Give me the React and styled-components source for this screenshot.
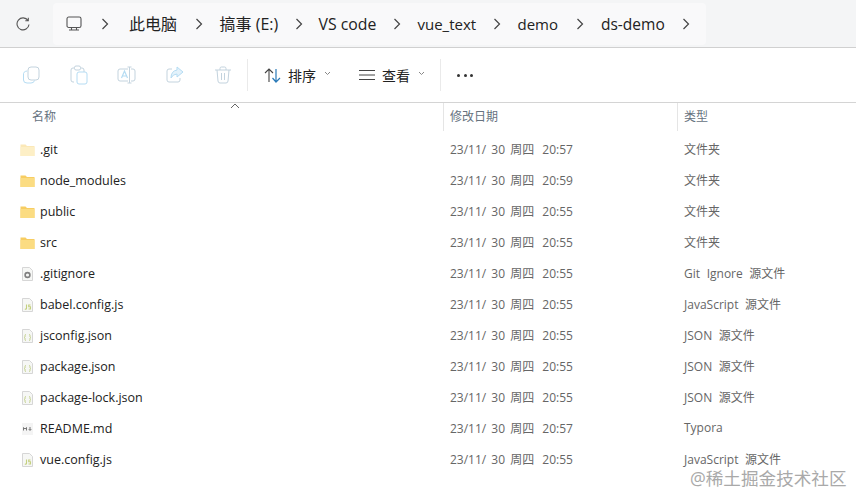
import React from "react";
import styled, { createGlobalStyle } from "styled-components";

const Global = createGlobalStyle`
  html, body { margin: 0; padding: 0; background: #fff; }
  body { font-family: "Open Sans", "Noto Sans CJK SC", sans-serif; overflow: hidden; }
`;
const Page = styled.div`
  position: relative; width: 856px; height: 494px; background: #fff; overflow: hidden;
  font-family: "Open Sans", "Noto Sans CJK SC", sans-serif;
`;
const AddressBar = styled.div`
  height: 48px; box-sizing: border-box; display: flex; align-items: stretch; background: #f4f5f6;
  border-bottom: 1px solid #d0d0d0; padding: 3px 0 2px 0;
`;
const Refresh = styled.div`width: 53px; display: flex; align-items: center; padding-left: 16px; box-sizing: border-box;`;
const Crumbs = styled.div`
  flex: 1; margin-right: 150px; display: flex; align-items: center; background: #f9f9fa; padding-left: 13px; border-radius: 4px;
`;
const Crumb = styled.span`
  font-size: ${p => p.$size}px; color: #222; white-space: nowrap; margin-left: ${p => p.$ml}px; width: ${p => p.$w}px; line-height: 20px; flex: none;
`;
const Chevron = styled.svg`width: 8px; height: 12px; margin-left: ${p => p.$ml}px; flex: none;`;
const Toolbar = styled.div`
  height: 55px; box-sizing: border-box; display: flex; align-items: center; border-bottom: 1px solid #d4d4d4; padding: 0 0 0 21px;
`;
const ToolIcon = styled.svg`width: 20px; height: 20px; margin-right: ${p => p.$mr ?? 28}px; flex: none;`;
const Divider = styled.div`width: 1px; height: 32px; background: #eaeaea; margin-right: 16px;`;
const ToolButton = styled.div`display: flex; align-items: center; margin-right: ${p => p.$mr}px;`;
const ToolLabel = styled.span`font-size: 14px; color: #222; margin-left: 6px; line-height: 18px; padding-top: 1px;`;
const Caret = styled.svg`width: 7px; height: 5px; margin-left: ${p => p.$ml}px; margin-bottom: 3px;`;
const Dots = styled.div`display: flex; gap: 3.5px; margin-top: 1px;`;
const Dot = styled.i`width: 3px; height: 3px; border-radius: 50%; background: #333; display: block;`;
const Grid = styled.div`display: grid; grid-template-columns: 443px 234px 1fr;`;
const Header = styled(Grid)`position: relative; height: 28px; align-items: center;`;
const HeadCell = styled.div`
  height: 28px; line-height: 27px; font-size: 12px; color: #66727e; box-sizing: border-box;
  padding-left: ${p => p.$pl}px; border-left: ${p => (p.$line ? "1px solid #e5e5e5" : "none")};
`;
const SortMark = styled.svg`position: absolute; left: 230px; top: 0; width: 10px; height: 6px;`;
const Rows = styled.div`padding-top: 3px;`;
const Row = styled(Grid)`height: 31px; align-items: center;`;
const NameCell = styled.div`display: flex; align-items: center; padding-left: 20px; font-size: 12.5px; color: #222;`;
const NameText = styled.span`margin-left: 5px; white-space: nowrap;`;
const DateCell = styled.div`padding: 0 0 2px 7px; font-size: 12px; word-spacing: 2px; color: #666; white-space: pre;`;
const TimeText = styled.span`margin-left: 3px;`;
const TypeCell = styled.div`padding: 0 0 2px 7px; font-size: 12px; word-spacing: 3.5px; color: #666; white-space: nowrap;`;
const FileSvg = styled.svg`width: 15px; height: 16px; flex: none;`;
const Watermark = styled.div`
  position: absolute; left: 690px; top: 468px; font-size: 17.6px; line-height: 20px; color: #a9a9a9; white-space: nowrap;
  text-shadow: 0 0 1px #fff;
`;

const Arrow = ({ ml }) => (
  <Chevron $ml={ml} viewBox="0 0 8 12"><path d="M1.5 1 L6.5 6 L1.5 11" fill="none" stroke="#444" strokeWidth="1.2" /></Chevron>
);

const FolderIcon = ({ faded }) => (
  <FileSvg viewBox="0 0 15 16" style={faded ? { opacity: 0.45 } : undefined}>
    <path d="M0.5 2.5 H5.5 L7 4 H14.5 V14 H0.5Z" fill="#f7cd62" />
    <rect x="0.5" y="5" width="14" height="9" fill="#fbdc82" />
  </FileSvg>
);
const PageBase = ({ children }) => (
  <FileSvg viewBox="0 0 15 16">
    <path d="M2.5 1.5 H9.5 L12.5 4.5 V14.5 H2.5Z" fill="#f6f7f5" stroke="#d6d6d6" />
    {children}
  </FileSvg>
);
const GearIcon = () => (
  <PageBase><circle cx="7.5" cy="9" r="2.4" fill="none" stroke="#808080" strokeWidth="1.6" /></PageBase>
);
const JsIcon = () => (
  <PageBase><path d="M6.5 7.5 V11.5 Q6.3 12.5 4.8 12 M10.5 8 H8.7 V9.8 H10.5 V12 H8.5" fill="none" stroke="#c4d07f" strokeWidth="1.1" /></PageBase>
);
const JsonIcon = () => (
  <PageBase><path d="M6 6.5 Q5 6.5 5 7.5 V9 L4.4 9.5 L5 10 V11.5 Q5 12.5 6 12.5 M9 6.5 Q10 6.5 10 7.5 V9 L10.6 9.5 L10 10 V11.5 Q10 12.5 9 12.5" fill="none" stroke="#c2d08c" strokeWidth="1" /></PageBase>
);
const MdIcon = () => (
  <FileSvg viewBox="0 0 15 16">
    <rect x="2" y="2" width="11" height="12" fill="#f4f4f4" />
    <path d="M3.5 9.5 V6.5 L5 8 L6.5 6.5 V9.5 M10 6 V9 M8.7 8 L10 9.5 L11.3 8" fill="none" stroke="#777" strokeWidth="1" />
  </FileSvg>
);

const tint = "#c3d3de", blue = "#b5dcf3";
const CopyIcon = () => (
  <ToolIcon viewBox="0 0 20 20"><rect x="7" y="2" width="11" height="13" rx="3" fill="none" stroke={tint} /><path d="M6 6 Q2 6.5 2.5 10 V15 Q2.5 18 6 18 H10 Q13 18 13.5 15.5" fill="none" stroke={blue} /></ToolIcon>
);
const PasteIcon = () => (
  <ToolIcon viewBox="0 0 20 20"><path d="M5 17 H4 Q2 17 2 15 V5 Q2 3 4 3 H13 Q15 3 15 5 V7" fill="none" stroke={tint} /><rect x="5.5" y="1" width="6" height="4" rx="1.5" fill="#fff" stroke={tint} /><rect x="8" y="7" width="10" height="12" rx="2" fill="#fff" stroke={blue} /></ToolIcon>
);
const RenameIcon = () => (
  <ToolIcon viewBox="0 0 20 20"><path d="M11 4 H3 Q1 4 1 6 V14 Q1 16 3 16 H11" fill="none" stroke={tint} /><path d="M14 4 H16 Q18 4 18 6 V14 Q18 16 16 16 H14 M12.5 2 V18 M10.5 2 H14.5 M10.5 18 H14.5" fill="none" stroke={tint} /><path d="M4.5 13 L7.5 6 L10.5 13 M5.6 11 H9.4" fill="none" stroke={blue} strokeWidth="1.2" /></ToolIcon>
);
const ShareIcon = () => (
  <ToolIcon viewBox="0 0 20 20"><path d="M7 4 H4 Q2 4 2 6 V15 Q2 17 4 17 H13 Q15 17 15 15 V13" fill="none" stroke={tint} /><path d="M12 2 L18 7 L12 12 V9 Q8 9 6 13 Q6 6 12 5Z" fill="#e3f2fb" stroke={blue} /></ToolIcon>
);
const TrashIcon = () => (
  <ToolIcon $mr={14} viewBox="0 0 20 20"><path d="M2 5 H18 M7 5 V3.5 Q7 2 8.5 2 H11.5 Q13 2 13 3.5 V5 M4 5 L5 16 Q5.2 18 7 18 H13 Q14.8 18 15 16 L16 5 M8.5 8 V15 M11.5 8 V15" fill="none" stroke={tint} /></ToolIcon>
);

const files = [
  [".git", "20:57", "文件夹", "fade"],
  ["node_modules", "20:59", "文件夹", "folder"],
  ["public", "20:55", "文件夹", "folder"],
  ["src", "20:55", "文件夹", "folder"],
  [".gitignore", "20:55", "Git Ignore 源文件", "gear"],
  ["babel.config.js", "20:55", "JavaScript 源文件", "js"],
  ["jsconfig.json", "20:55", "JSON 源文件", "json"],
  ["package.json", "20:55", "JSON 源文件", "json"],
  ["package-lock.json", "20:55", "JSON 源文件", "json"],
  ["README.md", "20:57", "Typora", "md"],
  ["vue.config.js", "20:55", "JavaScript 源文件", "js"],
];
const iconFor = {
  fade: <FolderIcon faded />, folder: <FolderIcon />, gear: <GearIcon />, js: <JsIcon />, json: <JsonIcon />, md: <MdIcon />,
};
// text, gap before, width, font size, gap to next chevron
const crumbs = [
  ["此电脑", 20, 48, 16, 18],
  ["搞事 (E:)", 16.5, 61, 16, 14],
  ["VS code", 16, 58, 15.8, 16],
  ["vue_text", 17, 59, 15, 16.5],
  ["demo", 16.5, 41, 15, 17],
  ["ds-demo", 17.5, 64, 15.5, 16.5],
];

export default function App() {
  return (
    <Page>
      <Global />
      <AddressBar>
        <Refresh>
          <svg width="14" height="14" viewBox="0 0 14 14"><path d="M12 3.5 A6 6 0 1 0 13 7.5 M12.3 0.8 V3.8 H9.3" fill="none" stroke="#555" strokeWidth="1.1" /></svg>
        </Refresh>
        <Crumbs>
          <svg width="16" height="16" viewBox="0 0 16 16"><rect x="1" y="1" width="14" height="10.5" rx="1.8" fill="none" stroke="#555" strokeWidth="1.1" /><path d="M3 14 H13 M5.5 12 V14 M10.5 12 V14" stroke="#555" strokeWidth="1.1" /></svg>
          <Arrow ml={19} />
          {crumbs.map(([t, a, w, s, b]) => (
            <React.Fragment key={t}>
              <Crumb $ml={a} $w={w} $size={s}>{t}</Crumb>
              <Arrow ml={b} />
            </React.Fragment>
          ))}
        </Crumbs>
      </AddressBar>
      <Toolbar>
        <CopyIcon /><PasteIcon /><RenameIcon /><ShareIcon /><TrashIcon />
        <Divider />
        <ToolButton $mr={27}>
          <svg width="18" height="15" viewBox="0 0 18 15"><path d="M5 14 V1 M1 5 L5 1 L9 5" fill="none" stroke="#444" strokeWidth="1.1" /><path d="M12 1 V14 M8.5 10 L12 14 L16 10" fill="none" stroke="#2a7ab8" strokeWidth="1.2" /></svg>
          <ToolLabel>排序</ToolLabel>
          <Caret $ml={8} viewBox="0 0 7 5"><path d="M1 1 L3.5 3.5 L6 1" fill="none" stroke="#888" /></Caret>
        </ToolButton>
        <ToolButton $mr={15}>
          <svg width="18" height="12" viewBox="0 0 18 12"><path d="M1 1.5 H17 M1 6 H17 M1 10.5 H17" stroke="#444" strokeWidth="1" /></svg>
          <ToolLabel>查看</ToolLabel>
          <Caret $ml={8} viewBox="0 0 7 5"><path d="M1 1 L3.5 3.5 L6 1" fill="none" stroke="#888" /></Caret>
        </ToolButton>
        <Divider />
        <Dots><Dot /><Dot /><Dot /></Dots>
      </Toolbar>
      <Header>
        <SortMark viewBox="0 0 10 6"><path d="M1 5 L5 1 L9 5" fill="none" stroke="#666" strokeWidth="1" /></SortMark>
        <HeadCell $pl={32}>名称</HeadCell>
        <HeadCell $pl={6} $line>修改日期</HeadCell>
        <HeadCell $pl={6} $line>类型</HeadCell>
      </Header>
      <Rows>
        {files.map(([name, time, type, kind]) => (
          <Row key={name}>
            <NameCell>{iconFor[kind]}<NameText>{name}</NameText></NameCell>
            <DateCell>23/11/ 30 周四 <TimeText>{time}</TimeText></DateCell>
            <TypeCell>{type}</TypeCell>
          </Row>
        ))}
      </Rows>
      <Watermark>@稀土掘金技术社区</Watermark>
    </Page>
  );
}
